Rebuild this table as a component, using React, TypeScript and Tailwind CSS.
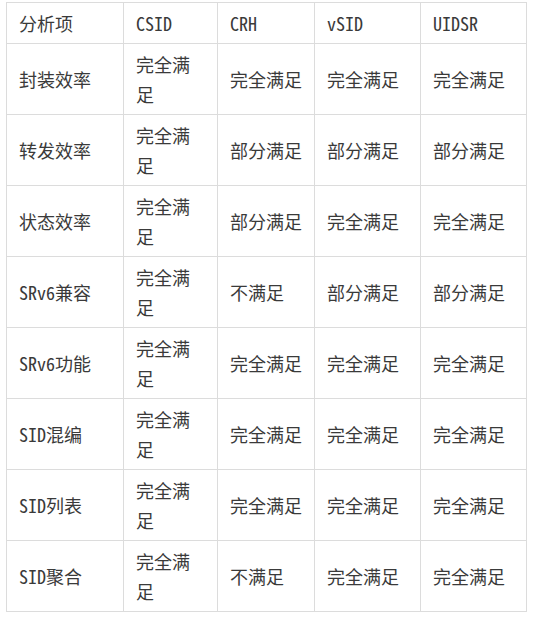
import React from 'react';

const columns = ['分析项', 'CSID', 'CRH', 'vSID', 'UIDSR'];

const rows: string[][] = [
  ['封装效率', '完全满足', '完全满足', '完全满足', '完全满足'],
  ['转发效率', '完全满足', '部分满足', '部分满足', '部分满足'],
  ['状态效率', '完全满足', '部分满足', '完全满足', '完全满足'],
  ['SRv6兼容', '完全满足', '不满足', '部分满足', '部分满足'],
  ['SRv6功能', '完全满足', '完全满足', '完全满足', '完全满足'],
  ['SID混编', '完全满足', '完全满足', '完全满足', '完全满足'],
  ['SID列表', '完全满足', '完全满足', '完全满足', '完全满足'],
  ['SID聚合', '完全满足', '不满足', '完全满足', '完全满足'],
];

const widths = ['w-[117px]', 'w-[94px]', 'w-[97px]', 'w-[106px]', 'w-[106px]'];

const App: React.FC = () => {
  return (
    <div
      className="bg-white min-h-screen px-[6px] pt-[2px] text-[#3a3a3a] text-[18px] leading-[30px] font-light"
      style={{ fontFamily: '"Noto Sans Mono CJK SC", "Liberation Mono", "Noto Sans CJK SC", monospace' }}
    >
      <table className="border-collapse table-fixed w-[521px]">
        <colgroup>
          {widths.map((w, i) => (
            <col key={i} className={w} />
          ))}
        </colgroup>
        <thead>
          <tr>
            {columns.map((c) => (
              <th key={c} className="border border-[#dcdcdc] px-3 py-[5px] h-[41px] text-left font-light align-middle">
                {c}
              </th>
            ))}
          </tr>
        </thead>
        <tbody>
          {rows.map((r, ri) => (
            <tr key={ri}>
              {r.map((cell, ci) => (
                <td key={ci} className="border border-[#dcdcdc] px-3 py-[5px] h-[71px] align-middle break-all">
                  {cell}
                </td>
              ))}
            </tr>
          ))}
        </tbody>
      </table>
    </div>
  );
};

export default App;
